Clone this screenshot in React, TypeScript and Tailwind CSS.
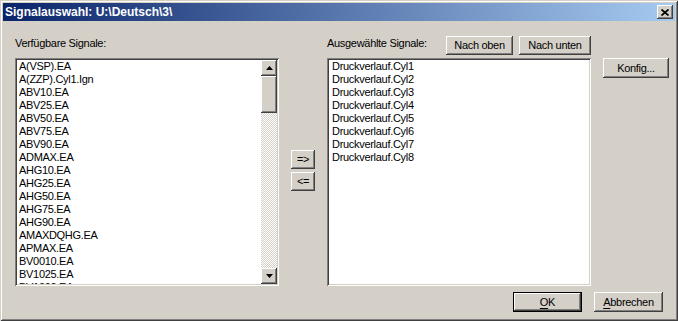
import React from 'react';

const raised =
  'bg-[#d4d0c8] shadow-[inset_-1px_-1px_0_#404040,inset_1px_1px_0_#ffffff,inset_-2px_-2px_0_#808080,inset_2px_2px_0_#d4d0c8]';
const sunken =
  'bg-white shadow-[inset_1px_1px_0_#808080,inset_-1px_-1px_0_#ffffff,inset_2px_2px_0_#404040,inset_-2px_-2px_0_#d4d0c8]';

const available = [
  'A(VSP).EA',
  'A(ZZP).Cyl1.Ign',
  'ABV10.EA',
  'ABV25.EA',
  'ABV50.EA',
  'ABV75.EA',
  'ABV90.EA',
  'ADMAX.EA',
  'AHG10.EA',
  'AHG25.EA',
  'AHG50.EA',
  'AHG75.EA',
  'AHG90.EA',
  'AMAXDQHG.EA',
  'APMAX.EA',
  'BV0010.EA',
  'BV1025.EA',
  'BV1090.EA',
];

const selected = Array.from({ length: 8 }, (_, i) => `Druckverlauf.Cyl${i + 1}`);

const Button: React.FC<{ className?: string; children: React.ReactNode }> = ({ className = '', children }) => (
  <div className={`${raised} flex items-center justify-center ${className}`}>{children}</div>
);

const Arrow: React.FC<{ down?: boolean }> = ({ down }) => (
  <svg width="7" height="4" viewBox="0 0 7 4" className="block">
    <polygon points={down ? '0,0 7,0 3.5,4' : '3.5,0 7,4 0,4'} fill="#000" />
  </svg>
);

const App: React.FC = () => {
  return (
    <div className="w-[678px] h-[321px] bg-[#d4d0c8] p-[3px] flex flex-col text-black text-[11px] tracking-[-0.3px] font-['Liberation_Sans',Arial,sans-serif] shadow-[inset_1px_1px_0_#d4d0c8,inset_-1px_-1px_0_#404040,inset_2px_2px_0_#ffffff,inset_-2px_-2px_0_#808080]">
      {/* Title bar */}
      <div className="h-[18px] flex items-center justify-between pl-[2px] pr-[2px] bg-[linear-gradient(to_right,#0a246a,#a6caf0)]">
        <span className="text-white font-bold text-[12px] tracking-normal leading-none">
          Signalauswahl: U:\Deutsch\3\
        </span>
        <div className={`${raised} w-[16px] h-[14px] flex items-center justify-center`}>
          <svg width="8" height="7" viewBox="0 0 8 7">
            <path d="M0.5 0.5 L7.5 6.5 M7.5 0.5 L0.5 6.5" stroke="#000" strokeWidth="1.7" />
          </svg>
        </div>
      </div>

      {/* Body */}
      <div className="flex-1 flex flex-col px-[12px]">
        <div className="grid grid-cols-[264px_24px_264px_66px] gap-x-[12px] mt-[15px]">
          {/* Header row */}
          <div className="pt-[1px] leading-[13px]">Verfügbare Signale:</div>
          <div />
          <div className="flex justify-between items-start">
            <span className="pt-[1px] leading-[13px]">Ausgewählte Signale:</span>
            <div className="flex gap-[6px]">
              <Button className="w-[67px] h-[19px]">Nach oben</Button>
              <Button className="w-[72px] h-[19px]">Nach unten</Button>
            </div>
          </div>
          <div />

          {/* Lists row */}
          <div className={`${sunken} mt-[3px] h-[228px] p-[2px] flex`}>
            <div className="flex-1 overflow-hidden pl-[2px]">
              {available.map((s) => (
                <div key={s} className="h-[13px] leading-[13px] whitespace-nowrap">
                  {s}
                </div>
              ))}
            </div>
            <div className="w-[16px] flex flex-col">
              <div className={`${raised} h-[16px] flex items-center justify-center`}>
                <Arrow />
              </div>
              <div className={`${raised} h-[37px]`} />
              <div className="flex-1 bg-[repeating-conic-gradient(#d4d0c8_0_25%,#ffffff_0_50%)] [background-size:2px_2px]" />
              <div className={`${raised} h-[16px] flex items-center justify-center`}>
                <Arrow down />
              </div>
            </div>
          </div>

          <div className="mt-[3px] pt-[92px] flex flex-col gap-[3px]">
            <Button className="h-[19px]">=&gt;</Button>
            <Button className="h-[19px]">&lt;=</Button>
          </div>

          <div className={`${sunken} mt-[3px] h-[228px] p-[2px] pl-[5px]`}>
            {selected.map((s) => (
              <div key={s} className="h-[13px] leading-[13px] whitespace-nowrap">
                {s}
              </div>
            ))}
          </div>

          <div className="mt-[3px]">
            <Button className="h-[20px]">Konfig...</Button>
          </div>
        </div>

        {/* Footer */}
        <div className="flex justify-end gap-[12px] mt-[6px]">
          <div className="border border-black w-[69px] h-[20px] flex">
            <Button className="flex-1">
              <span className="underline underline-offset-2">O</span>K
            </Button>
          </div>
          <Button className="w-[69px] h-[20px]">
            <span className="underline underline-offset-2">A</span>bbrechen
          </Button>
        </div>
      </div>
    </div>
  );
};

export default App;
